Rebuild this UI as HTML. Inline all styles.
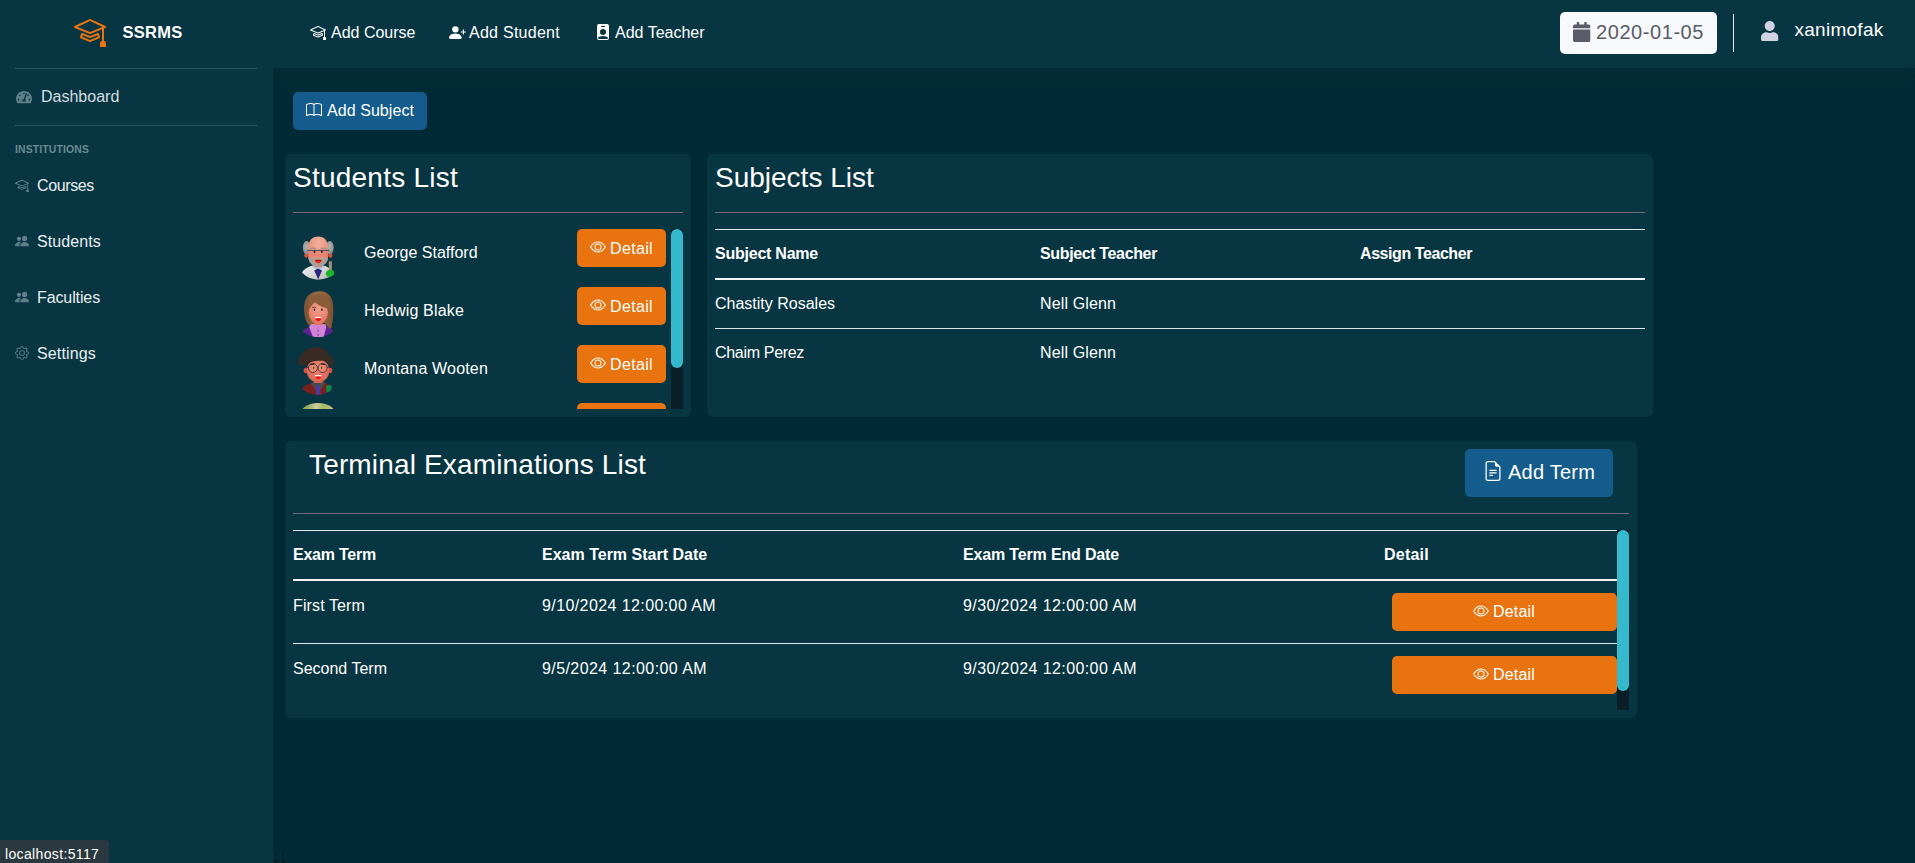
<!DOCTYPE html>
<html lang="en">
<head>
<meta charset="utf-8">
<title>SSRMS</title>
<style>
*{box-sizing:border-box;margin:0;padding:0}
html,body{width:1915px;height:863px;overflow:hidden}
body{position:relative;background:#002b36;font-family:"Liberation Sans",Arial,sans-serif;color:#fff;font-size:16px}
.abs{position:absolute}
.t{position:absolute;white-space:nowrap;line-height:1}
svg{display:block}
#sidebar{left:0;top:0;width:273px;height:863px;background:#073642}
#topbar{left:0;top:0;width:1642px;height:68px;background:#073642;box-shadow:0 2.4px 28px 0 rgba(58,59,69,.15)}
#topwrap{left:273px;top:0;width:1642px;height:200px;overflow:hidden}
.card{background:#073642;border-radius:6px}
.hr{position:absolute;height:1px}
.btn-o{position:absolute;background:#e9730f;border-radius:5px}
.btn-b{position:absolute;background:#145c8b;border-radius:5px}
</style>
</head>
<body>

<svg width="0" height="0" style="position:absolute">
<defs>
<symbol id="i-mortar" viewBox="0 0 16 16"><path d="M8.211 2.047a.5.5 0 0 0-.422 0l-7.5 3.5a.5.5 0 0 0 .025.917l7.5 3a.5.5 0 0 0 .372 0L14 7.14V13a1 1 0 0 0-1 1v2h3v-2a1 1 0 0 0-1-1V6.739l.686-.275a.5.5 0 0 0 .025-.917l-7.5-3.5ZM8 8.46 1.758 5.965 8 3.052l6.242 2.913L8 8.46Z"/><path d="M4.176 9.032a.5.5 0 0 0-.656.327l-.5 1.7a.5.5 0 0 0 .294.605l4.5 1.8a.5.5 0 0 0 .372 0l4.5-1.8a.5.5 0 0 0 .294-.605l-.5-1.7a.5.5 0 0 0-.656-.327L8 10.466 4.176 9.032Zm-.068 1.873.22-.748 3.496 1.311a.5.5 0 0 0 .352 0l3.496-1.311.22.748L8 12.46l-3.892-1.556Z"/></symbol>
<symbol id="i-people" viewBox="0 0 16 16"><path d="M7 14s-1 0-1-1 1-4 5-4 5 3 5 4-1 1-1 1H7zm4-6a3 3 0 1 0 0-6 3 3 0 0 0 0 6z"/><path fill-rule="evenodd" d="M5.216 14A2.238 2.238 0 0 1 5 13c0-1.355.68-2.75 1.936-3.72A6.325 6.325 0 0 0 5 9c-4 0-5 3-5 4s1 1 1 1h4.216z"/><path d="M4.500 8a2.500 2.500 0 1 0 0-5 2.500 2.500 0 0 0 0 5z"/></symbol>
<symbol id="i-gear" viewBox="0 0 16 16"><path d="M8 4.754a3.246 3.246 0 1 0 0 6.492 3.246 3.246 0 0 0 0-6.492zM5.754 8a2.246 2.246 0 1 1 4.492 0 2.246 2.246 0 0 1-4.492 0z"/><path d="M9.796 1.343c-.527-1.790-3.065-1.790-3.592 0l-.094.319a.873.873 0 0 1-1.255.520l-.292-.160c-1.640-.892-3.433.902-2.540 2.541l.159.292a.873.873 0 0 1-.520 1.255l-.319.094c-1.790.527-1.790 3.065 0 3.592l.319.094a.873.873 0 0 1 .520 1.255l-.160.292c-.892 1.640.901 3.434 2.541 2.540l.292-.159a.873.873 0 0 1 1.255.520l.094.319c.527 1.790 3.065 1.790 3.592 0l.094-.319a.873.873 0 0 1 1.255-.520l.292.160c1.640.893 3.434-.902 2.540-2.541l-.159-.292a.873.873 0 0 1 .520-1.255l.319-.094c1.790-.527 1.790-3.065 0-3.592l-.319-.094a.873.873 0 0 1-.520-1.255l.160-.292c.893-1.640-.902-3.433-2.541-2.540l-.292.159a.873.873 0 0 1-1.255-.520l-.094-.319zm-2.633.283c.246-.835 1.428-.835 1.674 0l.094.319a1.873 1.873 0 0 0 2.693 1.115l.291-.160c.764-.415 1.600.420 1.184 1.185l-.159.292a1.873 1.873 0 0 0 1.116 2.692l.318.094c.835.246.835 1.428 0 1.674l-.319.094a1.873 1.873 0 0 0-1.115 2.693l.160.291c.415.764-.420 1.600-1.185 1.184l-.291-.159a1.873 1.873 0 0 0-2.693 1.116l-.094.318c-.246.835-1.428.835-1.674 0l-.094-.319a1.873 1.873 0 0 0-2.692-1.115l-.292.160c-.764.415-1.600-.420-1.184-1.185l.159-.291A1.873 1.873 0 0 0 1.945 8.930l-.319-.094c-.835-.246-.835-1.428 0-1.674l.319-.094A1.873 1.873 0 0 0 3.060 4.377l-.160-.292c-.415-.764.420-1.600 1.185-1.184l.292.159a1.873 1.873 0 0 0 2.692-1.115l.094-.319z"/></symbol>
<symbol id="i-eye" viewBox="0 0 16 16"><path d="M16 8s-3-5.500-8-5.500S0 8 0 8s3 5.500 8 5.500S16 8 16 8zM1.173 8a13.133 13.133 0 0 1 1.660-2.043C4.120 4.668 5.880 3.500 8 3.500c2.120 0 3.879 1.168 5.168 2.457A13.133 13.133 0 0 1 14.828 8c-.058.087-.122.183-.195.288-.335.480-.830 1.120-1.465 1.755C11.879 11.332 10.119 12.500 8 12.500c-2.120 0-3.879-1.168-5.168-2.457A13.134 13.134 0 0 1 1.172 8z"/><path d="M8 5.500a2.500 2.500 0 1 0 0 5 2.500 2.500 0 0 0 0-5zM4.500 8a3.500 3.500 0 1 1 7 0 3.500 3.500 0 0 1-7 0z"/></symbol>
<symbol id="i-book" viewBox="0 0 16 16"><path d="M1 2.828c.885-.370 2.154-.769 3.388-.893 1.330-.134 2.458.063 3.112.752v9.746c-.935-.530-2.120-.603-3.213-.493-1.180.120-2.370.461-3.287.811V2.828zm7.500-.141c.654-.689 1.782-.886 3.112-.752 1.234.124 2.503.523 3.388.893v9.923c-.918-.350-2.107-.692-3.287-.810-1.094-.111-2.278-.039-3.213.492V2.687zM8 1.783C7.015.936 5.587.810 4.287.940c-1.514.153-3.042.672-3.994 1.105A.5.5 0 0 0 0 2.500v11a.5.5 0 0 0 .707.455c.882-.400 2.303-.881 3.680-1.020 1.409-.142 2.590.087 3.223.877a.5.5 0 0 0 .780 0c.633-.790 1.814-1.019 3.222-.877 1.378.139 2.800.620 3.681 1.020A.5.5 0 0 0 16 13.500v-11a.5.5 0 0 0-.293-.455c-.952-.433-2.480-.952-3.994-1.105C10.413.809 8.985.936 8 1.783z"/></symbol>
<symbol id="i-file" viewBox="0 0 16 16"><path d="M5.500 7a.5.5 0 0 0 0 1h5a.5.5 0 0 0 0-1h-5zM5 9.500a.5.5 0 0 1 .5-.5h5a.5.5 0 0 1 0 1h-5a.5.5 0 0 1-.5-.5zm0 2a.5.5 0 0 1 .5-.5h2a.5.5 0 0 1 0 1h-2a.5.5 0 0 1-.5-.5z"/><path d="M9.500 0H4a2 2 0 0 0-2 2v12a2 2 0 0 0 2 2h8a2 2 0 0 0 2-2V4.500L9.500 0zm0 1v2A1.500 1.500 0 0 0 11 4.500h2V14a1 1 0 0 1-1 1H4a1 1 0 0 1-1-1V2a1 1 0 0 1 1-1h5.500z"/></symbol>
<symbol id="i-pplus" viewBox="0 0 16 16"><path d="M1 14s-1 0-1-1 1-4 6-4 6 3 6 4-1 1-1 1H1zm5-6a3 3 0 1 0 0-6 3 3 0 0 0 0 6z"/><path fill-rule="evenodd" d="M13.500 5a.5.5 0 0 1 .5.5V7h1.500a.5.5 0 0 1 0 1H14v1.500a.5.5 0 0 1-1 0V8h-1.500a.5.5 0 0 1 0-1H13V5.500a.5.5 0 0 1 .5-.5z"/></symbol>
<symbol id="i-badge" viewBox="0 0 16 16"><path d="M2 2a2 2 0 0 1 2-2h8a2 2 0 0 1 2 2v12a2 2 0 0 1-2 2H4a2 2 0 0 1-2-2V2zm4.500 0a.5.5 0 0 0 0 1h3a.5.5 0 0 0 0-1h-3zM8 11a3 3 0 1 0 0-6 3 3 0 0 0 0 6zm5 2.755C12.146 12.825 10.623 12 8 12s-4.146.826-5 1.755V14a1 1 0 0 0 1 1h8a1 1 0 0 0 1-1v-.245z"/></symbol>
<symbol id="i-user" viewBox="0 0 448 512"><path d="M224 256c70.700 0 128-57.300 128-128S294.700 0 224 0 96 57.300 96 128s57.300 128 128 128zm89.600 32h-16.700c-22.200 10.200-46.900 16-72.900 16s-50.600-5.800-72.900-16h-16.700C60.200 288 0 348.200 0 422.400V464c0 26.500 21.500 48 48 48h352c26.500 0 48-21.500 48-48v-41.600c0-74.200-60.200-134.400-134.400-134.400z"/></symbol>
<symbol id="i-cal" viewBox="0 0 448 512"><path d="M12 192h424c6.600 0 12 5.400 12 12v260c0 26.500-21.500 48-48 48H48c-26.500 0-48-21.500-48-48V204c0-6.600 5.400-12 12-12zm436-44v-36c0-26.500-21.500-48-48-48h-48V12c0-6.600-5.400-12-12-12h-40c-6.600 0-12 5.400-12 12v52H160V12c0-6.600-5.400-12-12-12h-40c-6.600 0-12 5.400-12 12v52H48C21.500 64 0 85.500 0 112v36c0 6.600 5.400 12 12 12h424c6.600 0 12-5.400 12-12z"/></symbol>
<symbol id="i-tach" viewBox="0 0 576 512"><path d="M288 32C128.940 32 0 160.940 0 320c0 52.800 14.250 102.260 39.060 144.800 5.610 9.620 16.300 15.200 27.440 15.200h443c11.140 0 21.830-5.580 27.440-15.200C561.750 422.260 576 372.800 576 320c0-159.060-128.940-288-288-288zm0 64c14.710 0 26.580 10.130 30.320 23.650-1.110 2.260-2.640 4.230-3.450 6.670l-9.220 27.670c-5.130 3.490-10.970 6.010-17.640 6.010-17.670 0-32-14.330-32-32S270.330 96 288 96zM96 384c-17.670 0-32-14.330-32-32s14.330-32 32-32 32 14.330 32 32-14.330 32-32 32zm48-160c-17.670 0-32-14.330-32-32s14.330-32 32-32 32 14.330 32 32-14.330 32-32 32zm246.770-72.410l-61.330 184C343.130 347.330 352 364.540 352 384c0 11.720-3.380 22.550-8.880 32H232.880c-5.500-9.450-8.880-20.280-8.880-32 0-33.940 26.500-61.430 59.900-63.590l61.340-184.010c4.170-12.560 17.730-19.450 30.360-15.170 12.570 4.190 19.350 17.790 15.170 30.360zm14.660 57.200l15.520-46.550c3.470-1.290 7.130-2.230 11.050-2.230 17.670 0 32 14.330 32 32s-14.330 32-32 32c-11.380-.010-21.250-6.100-26.570-15.220zM480 384c-17.670 0-32-14.330-32-32s14.330-32 32-32 32 14.330 32 32-14.330 32-32 32z"/></symbol>

<symbol id="av0" viewBox="0 0 50 60">
<defs><radialGradient id="g0" cx="50%" cy="22%" r="75%"><stop offset="0" stop-color="#f6b29d"/><stop offset="1" stop-color="#e3826c"/></radialGradient>
<linearGradient id="c0" x1="0" y1="0" x2="1" y2="1"><stop offset="0" stop-color="#f4f4f1"/><stop offset="1" stop-color="#b9b9b5"/></linearGradient>
<radialGradient id="hh0" cx="50%" cy="40%" r="60%"><stop offset="0" stop-color="#b4b4b4"/><stop offset="1" stop-color="#8a8a8a"/></radialGradient></defs>
<ellipse cx="11.200" cy="25.200" rx="1.900" ry="2.700" fill="#d9513c"/><ellipse cx="35.400" cy="25.200" rx="1.900" ry="2.700" fill="#d9513c"/>
<ellipse cx="11.700" cy="17.600" rx="3.900" ry="6.600" fill="url(#hh0)"/><ellipse cx="34.800" cy="17.600" rx="3.900" ry="6.600" fill="url(#hh0)"/>
<path d="M7 42.500 C10 38 15 36 19 35.600 L28 35.600 C31 36 34 37.500 36 40 L37 45 C33 48.500 27 49.600 23 49.600 C17 49.600 11 47 7 42.500Z" fill="url(#c0)"/>
<path d="M16.500 36.500 L23 41 L30 36.500 L27 35 L19 35Z" fill="#a9cdea"/>
<path d="M19.200 40.500 L23 38.500 L27 40.500 L23.200 49.300Z" fill="#2a2380"/>
<rect x="19.500" y="33" width="7.500" height="4.200" fill="#e0735c"/>
<path d="M13.300 17.500 C13.300 10.500 17.500 6.600 23.200 6.600 C29 6.600 33.100 10.500 33.100 17.500 L33.100 26 C33.100 32.500 28.500 36 23.200 36 C17.900 36 13.300 32.500 13.300 26Z" fill="url(#g0)"/>
<path d="M13.300 27 C15 28.800 19 28.600 23.200 27.700 C27 28.600 31 28.800 33.100 27 C33.100 33 28.500 36.300 23.200 36.300 C17.900 36.300 13.300 33 13.300 27Z" fill="#ad9d94"/>
<path d="M19.800 30.100 Q23.300 29.500 26.800 30.100 Q25.800 33.200 23.300 33.200 Q20.800 33.200 19.800 30.100Z" fill="#c41015"/>
<ellipse cx="23.300" cy="32" rx="2" ry="1.100" fill="#ff2a25"/>
<path d="M15 18.700 q3-1.300 6 0 M25.500 18.700 q3-1.300 6 0" stroke="#a09590" stroke-width="1.200" fill="none"/>
<rect x="13" y="20.800" width="20.500" height="6" rx="1.200" fill="#e5756a" opacity=".5"/>
<rect x="12.200" y="19.900" width="22" height="1.100" fill="#4a5560"/>
<ellipse cx="19.500" cy="21.800" rx=".9" ry="1.300" fill="#2a2220"/><ellipse cx="26.800" cy="21.800" rx=".9" ry="1.300" fill="#2a2220"/>
<rect x="33.800" y="31.300" width="3.100" height="9" fill="#a39274"/>
<ellipse cx="35" cy="43.300" rx="4.300" ry="3.400" transform="rotate(-20 35 43.300)" fill="#1cb42b"/>
</symbol>
<symbol id="av1" viewBox="0 0 50 60">
<defs><radialGradient id="g1" cx="50%" cy="35%" r="70%"><stop offset="0" stop-color="#f5a08b"/><stop offset="1" stop-color="#e2735f"/></radialGradient>
<linearGradient id="h1" x1="0" y1="0" x2="1" y2="0"><stop offset="0" stop-color="#7d5232"/><stop offset=".5" stop-color="#9a6b44"/><stop offset="1" stop-color="#7d5232"/></linearGradient></defs>
<path d="M9 24 C9 12 15 6.300 25 6.300 C34 6.300 38.300 13 38.300 23 C38.300 32 37.500 40 35.800 44.500 C32 42 30 38 30 38 L15 40.500 C13 40.500 9 34 9 24Z" fill="url(#h1)"/>
<path d="M7.300 45.800 C11 43 14 42 17 41 L30 41 C33 42 36 43.500 38.700 46 C34 50 29 52 23 52 C17 52 11 50 7.300 45.800Z" fill="#5a2592"/>
<path d="M14 41.500 L16.500 39 L30.500 39 L31.300 42 L28.800 51.500 C25 52.200 21 52.200 17.800 51.500Z" fill="#d384d6"/>
<path d="M22.800 42 v9.500" stroke="#b565c0" stroke-width=".8"/>
<circle cx="23.300" cy="45.600" r=".7" fill="#6a3aa0"/><circle cx="23.300" cy="50" r=".7" fill="#6a3aa0"/>
<rect x="19.500" y="36" width="8" height="4" fill="#dc6f5c"/>
<ellipse cx="23.300" cy="27.500" rx="9.600" ry="11.400" fill="url(#g1)"/>
<path d="M13.800 25 C14 17 17 13 20.500 10 C24 8 30 9 33.500 14 C35 17 35 21 34.600 23.500 C30 23 25 22 20 17 C18 19 16 21 13.800 25Z" fill="#8a5c38"/>
<path d="M17 22.700 q2.200-1 4.200 0" stroke="#7a4e30" stroke-width="1" fill="none"/>
<ellipse cx="19.500" cy="24.800" rx=".85" ry="1.300" fill="#2b3040"/><ellipse cx="26.800" cy="24.800" rx=".85" ry="1.300" fill="#2b3040"/>
<path d="M19.800 32.200 Q23.300 31.300 26.800 32.200 Q25.800 36.200 23.300 36.200 Q20.800 36.200 19.800 32.200Z" fill="#ee1418"/>
<path d="M19.800 32.200 Q23.300 31.300 26.800 32.200 L26.400 33.300 Q23.300 32.700 20.200 33.300Z" fill="#fff"/>
</symbol>
<symbol id="av2" viewBox="0 0 50 60">
<defs><radialGradient id="g2" cx="50%" cy="35%" r="70%"><stop offset="0" stop-color="#ee8a74"/><stop offset="1" stop-color="#d6614f"/></radialGradient></defs>
<path d="M7.100 48.500 C11 45 15 43.300 18 42.600 L29 42.600 C32 43.300 34.500 44.500 36.800 47.500 C34 52 29 54.800 23 54.800 C17 54.800 11 52.500 7.100 48.500Z" fill="#7b1f1c"/>
<path d="M15.500 43.500 L18.500 41.500 L28.500 41.500 L30.500 43.500 L26.500 49 L20 49Z" fill="#4b4b4b"/>
<path d="M20.800 46 L23 44.400 L25.300 46 L25.600 54.600 L20.600 54.600Z" fill="#4b3c9c"/>
<path d="M31 46 l3.500-1.200 l2.500 1.500 l-1 4.500 l-4.500 1.800Z" fill="#0d8a4c"/>
<rect x="19" y="39" width="8.500" height="4" fill="#d2604e"/>
<ellipse cx="10.600" cy="30.500" rx="1.900" ry="2.800" fill="#d8503f"/><ellipse cx="35.400" cy="30.500" rx="1.900" ry="2.800" fill="#d8503f"/>
<ellipse cx="23" cy="30.800" rx="11.300" ry="11.600" fill="url(#g2)"/>
<path d="M3.300 21 C5 14 11 7.100 21 7.100 C28 7.100 31.500 10 33.500 14.500 C37 15.500 39 19 38.600 22.500 C38.300 25 37 27 35 27.800 C35 23 32 20.800 26 20.800 C19 20.800 14 22 11 25.500 C8 25.800 5 25 3.600 23.500Z" fill="#3a2a25"/>
<circle cx="17.900" cy="28" r="4.500" fill="#f0a090" fill-opacity=".35" stroke="#4a3530" stroke-width=".9"/><circle cx="27.600" cy="28" r="4.500" fill="#f0a090" fill-opacity=".35" stroke="#4a3530" stroke-width=".9"/>
<path d="M22.400 27.500 h.8 M11 27.500 l2.500 0 M32 27.500 l3 0" stroke="#4a3530" stroke-width=".9"/>
<path d="M15.500 24.600 l4-.8 M26 23.800 l4 .8" stroke="#2e2220" stroke-width="1.200"/>
<ellipse cx="18.800" cy="27.800" rx=".8" ry="1.200" fill="#5a5a10"/><ellipse cx="26.600" cy="27.800" rx=".8" ry="1.200" fill="#5a5a10"/>
<path d="M19.800 35.300 Q23.300 34.500 26.800 35.300 Q25.800 39.300 23.300 39.300 Q20.800 39.300 19.800 35.300Z" fill="#ee1418"/>
<path d="M19.800 35.300 Q23.300 34.500 26.800 35.300 L26.400 36.500 Q23.300 35.900 20.200 36.500Z" fill="#fff"/>
</symbol>
<symbol id="av3" viewBox="0 0 50 60">
<defs><linearGradient id="g3" x1="0" y1="0" x2="1" y2="0"><stop offset="0" stop-color="#a9a21e"/><stop offset=".25" stop-color="#8fb26a"/><stop offset=".45" stop-color="#d8c9a0"/><stop offset=".65" stop-color="#9cbf5a"/><stop offset=".85" stop-color="#d0b890"/><stop offset="1" stop-color="#a0a828"/></linearGradient></defs>
<ellipse cx="23" cy="21" rx="19" ry="14" fill="url(#g3)"/>
</symbol>
</defs>
</svg>
<div id="sidebar" class="abs"></div>
<svg class="abs" style="left:73.5px;top:15px" width="32" height="32" fill="#e9730f"><use href="#i-mortar"/></svg>
<div class="t" id="brand" style="left:122.5px;top:24px;font-size:16.5px;font-weight:bold;letter-spacing:0.260px">SSRMS</div>
<div class="hr" style="left:15px;top:68px;width:242px;background:#2c545e"></div>
<svg class="abs" style="left:16px;top:89.7px" width="16" height="14.2" fill="#5e7f89"><use href="#i-tach"/></svg>
<div class="t" id="s-dash" style="left:41px;top:89px;font-size:16px;color:#d5dde0">Dashboard</div>
<div class="hr" style="left:15px;top:125px;width:242px;background:#2c545e"></div>
<div class="t" id="s-inst" style="left:15px;top:145px;font-size:10.4px;font-weight:bold;color:#6d8a93;letter-spacing:0.150px">INSTITUTIONS</div>
<svg class="abs" style="left:15px;top:178.2px" width="14" height="14" fill="#5e7f89"><use href="#i-mortar"/></svg>
<div class="t" id="s-courses" style="left:37px;top:178px;font-size:16px;color:#e9eef0;letter-spacing:-0.371px">Courses</div>
<svg class="abs" style="left:15px;top:234.2px" width="14" height="14" fill="#5e7f89"><use href="#i-people"/></svg>
<div class="t" id="s-students" style="left:37px;top:234px;font-size:16px;color:#e9eef0;letter-spacing:0.100px">Students</div>
<svg class="abs" style="left:15px;top:290.2px" width="14" height="14" fill="#5e7f89"><use href="#i-people"/></svg>
<div class="t" id="s-faculties" style="left:37px;top:290px;font-size:16px;color:#e9eef0;letter-spacing:-0.111px">Faculties</div>
<svg class="abs" style="left:15px;top:346.2px" width="14" height="14" fill="#5e7f89"><use href="#i-gear"/></svg>
<div class="t" id="s-settings" style="left:37px;top:346px;font-size:16px;color:#e9eef0;letter-spacing:0.150px">Settings</div>
<div class="t" id="status" style="left:0;top:840px;width:109px;height:23px;background:#2a3840;border-top-right-radius:4px;font-size:14px;line-height:28px;padding-left:5px;color:#fff;letter-spacing:0.35px">localhost:5117</div>
<div id="topwrap" class="abs"><div id="topbar" class="abs"></div></div>
<svg class="abs" style="left:310.4px;top:24px" width="16" height="16" fill="#fff"><use href="#i-mortar"/></svg>
<div class="t" id="t-course" style="left:331px;top:25px;font-size:16px">Add Course</div>
<svg class="abs" style="left:448.6px;top:24px" width="17" height="17" fill="#fff"><use href="#i-pplus"/></svg>
<div class="t" id="t-student" style="left:469px;top:25px;font-size:16px;letter-spacing:0.264px">Add Student</div>
<svg class="abs" style="left:594.8px;top:24px" width="16" height="16" fill="#fff"><use href="#i-badge"/></svg>
<div class="t" id="t-teacher" style="left:615px;top:25px;font-size:16px">Add Teacher</div>
<div class="abs" style="left:1560px;top:12px;width:157px;height:42px;background:#f8f9fc;border-radius:5px"></div>
<svg class="abs" style="left:1573px;top:22px" width="17.5" height="20" fill="#5a5c69"><use href="#i-cal"/></svg>
<div class="t" id="t-date" style="left:1596px;top:22px;font-size:20px;color:#5a5c69;letter-spacing:0.570px">2020-01-05</div>
<div class="abs" style="left:1733px;top:14px;width:1px;height:38px;background:#e3e6f0"></div>
<svg class="abs" style="left:1761px;top:21px" width="17.5" height="20" fill="#d1d3e2"><use href="#i-user"/></svg>
<div class="t" id="t-user" style="left:1794.5px;top:20px;font-size:19px;letter-spacing:0.267px">xanimofak</div>
<div class="btn-b" style="left:293px;top:92px;width:134px;height:38px"></div>
<svg class="abs" style="left:306px;top:102px" width="16" height="16" fill="#fff"><use href="#i-book"/></svg>
<div class="t" id="b-subject" style="left:327px;top:103px;font-size:16px;letter-spacing:0.064px">Add Subject</div>
<div class="abs card" style="left:285px;top:154px;width:406px;height:263px"></div>
<div class="t" id="h-students" style="left:293px;top:164px;font-size:28px;letter-spacing:0.238px">Students List</div>
<div class="hr" style="left:293px;top:212px;width:390px;background:#6e6b74"></div>
<div class="abs" id="stulist" style="left:293px;top:229px;width:378px;height:180px;overflow:hidden">
<svg class="abs" style="left:2px;top:1px" width="50" height="60"><use href="#av0"/></svg>
<div class="t" id="n0" style="left:71px;top:16px;font-size:16px">George Stafford</div>
<div class="btn-o" style="left:284px;top:0px;width:89px;height:38px"></div>
<svg class="abs" style="left:297px;top:10px" width="16" height="16" fill="#fff"><use href="#i-eye"/></svg>
<div class="t" style="left:317px;top:12px;font-size:16px;letter-spacing:0.35px">Detail</div>
<svg class="abs" style="left:2px;top:56px" width="50" height="60"><use href="#av1"/></svg>
<div class="t" id="n1" style="left:71px;top:74px;font-size:16px;letter-spacing:0.183px">Hedwig Blake</div>
<div class="btn-o" style="left:284px;top:58px;width:89px;height:38px"></div>
<svg class="abs" style="left:297px;top:68px" width="16" height="16" fill="#fff"><use href="#i-eye"/></svg>
<div class="t" style="left:317px;top:70px;font-size:16px;letter-spacing:0.35px">Detail</div>
<svg class="abs" style="left:2px;top:111px" width="50" height="60"><use href="#av2"/></svg>
<div class="t" id="n2" style="left:71px;top:132px;font-size:16px;letter-spacing:0.171px">Montana Wooten</div>
<div class="btn-o" style="left:284px;top:116px;width:89px;height:38px"></div>
<svg class="abs" style="left:297px;top:126px" width="16" height="16" fill="#fff"><use href="#i-eye"/></svg>
<div class="t" style="left:317px;top:128px;font-size:16px;letter-spacing:0.35px">Detail</div>
<svg class="abs" style="left:2px;top:166.600px" width="50" height="60"><use href="#av3"/></svg>
<div class="btn-o" style="left:284px;top:174px;width:89px;height:38px"></div>
<svg class="abs" style="left:297px;top:184px" width="16" height="16" fill="#fff"><use href="#i-eye"/></svg>
<div class="t" style="left:317px;top:186px;font-size:16px;letter-spacing:0.35px">Detail</div>
</div>
<div class="abs" style="left:671px;top:229px;width:12px;height:180px;background:#0b1d26"></div>
<div class="abs" style="left:671px;top:229px;width:12px;height:139px;background:#36b9cc;border-radius:6px"></div>
<div class="abs card" style="left:707px;top:154px;width:946px;height:263px"></div>
<div class="t" id="h-subjects" style="left:715px;top:164px;font-size:28px">Subjects List</div>
<div class="hr" style="left:715px;top:212px;width:930px;background:#6e6b74"></div>
<div class="hr" style="left:715px;top:229px;width:930px;background:#dfe6e9"></div>
<div class="hr" style="left:715px;top:278px;width:930px;height:2px;background:#f1f4f5"></div>
<div class="hr" style="left:715px;top:328px;width:930px;background:#dfe6e9"></div>
<div class="t" id="th1" style="left:715px;top:246px;font-size:16px;font-weight:bold;letter-spacing:-0.233px">Subject Name</div>
<div class="t" id="th2" style="left:1040px;top:246px;font-size:16px;font-weight:bold;letter-spacing:-0.360px">Subject Teacher</div>
<div class="t" id="th3" style="left:1360px;top:246px;font-size:16px;font-weight:bold;letter-spacing:-0.429px">Assign Teacher</div>
<div class="t" id="sr1a" style="left:715px;top:296px;font-size:16px">Chastity Rosales</div>
<div class="t" id="sr1b" style="left:1040px;top:296px;font-size:16px;letter-spacing:0.130px">Nell Glenn</div>
<div class="t" id="sr2a" style="left:715px;top:345px;font-size:16px;letter-spacing:-0.318px">Chaim Perez</div>
<div class="t" id="sr2b" style="left:1040px;top:345px;font-size:16px;letter-spacing:0.130px">Nell Glenn</div>
<div class="abs card" style="left:285px;top:441px;width:1352px;height:277px"></div>
<div class="t" id="h-term" style="left:309px;top:451px;font-size:28px;letter-spacing:0.154px">Terminal Examinations List</div>
<div class="btn-b" style="left:1465px;top:449px;width:148px;height:48px"></div>
<svg class="abs" style="left:1482.5px;top:461px" width="20" height="20" fill="#fff"><use href="#i-file"/></svg>
<div class="t" id="b-term" style="left:1508px;top:462px;font-size:20px;letter-spacing:0.225px">Add Term</div>
<div class="hr" style="left:293px;top:513px;width:1336px;background:#6e6b74"></div>
<div class="hr" style="left:293px;top:530px;width:1324px;background:#dfe6e9"></div>
<div class="hr" style="left:293px;top:579px;width:1324px;height:2px;background:#f1f4f5"></div>
<div class="hr" style="left:293px;top:643px;width:1324px;background:#dfe6e9"></div>
<div class="t" id="eh1" style="left:293px;top:547px;font-size:16px;font-weight:bold;letter-spacing:-0.233px">Exam Term</div>
<div class="t" id="eh2" style="left:542px;top:547px;font-size:16px;font-weight:bold">Exam Term Start Date</div>
<div class="t" id="eh3" style="left:963px;top:547px;font-size:16px;font-weight:bold;letter-spacing:-0.161px">Exam Term End Date</div>
<div class="t" id="eh4" style="left:1384px;top:547px;font-size:16px;font-weight:bold;letter-spacing:0.233px">Detail</div>
<div class="t" id="er1a" style="left:293px;top:598px;font-size:16px;letter-spacing:0.120px">First Term</div>
<div class="t" id="er1b" style="left:542px;top:598px;font-size:16px;letter-spacing:0.405px">9/10/2024 12:00:00 AM</div>
<div class="t" id="er1c" style="left:963px;top:598px;font-size:16px;letter-spacing:0.405px">9/30/2024 12:00:00 AM</div>
<div class="btn-o" style="left:1392px;top:593px;width:225px;height:38px"></div>
<svg class="abs" style="left:1473px;top:603px" width="16" height="16" fill="#fff"><use href="#i-eye"/></svg>
<div class="t" id="ed1" style="left:1493px;top:604px;font-size:16px;letter-spacing:0.183px">Detail</div>
<div class="t" id="er2a" style="left:293px;top:661px;font-size:16px">Second Term</div>
<div class="t" id="er2b" style="left:542px;top:661px;font-size:16px;letter-spacing:0.420px">9/5/2024 12:00:00 AM</div>
<div class="t" id="er2c" style="left:963px;top:661px;font-size:16px;letter-spacing:0.405px">9/30/2024 12:00:00 AM</div>
<div class="btn-o" style="left:1392px;top:656px;width:225px;height:38px"></div>
<svg class="abs" style="left:1473px;top:666px" width="16" height="16" fill="#fff"><use href="#i-eye"/></svg>
<div class="t" id="ed2" style="left:1493px;top:667px;font-size:16px;letter-spacing:0.183px">Detail</div>
<div class="abs" style="left:1617px;top:530px;width:12px;height:180px;background:#0b1d26"></div>
<div class="abs" style="left:1617px;top:530px;width:12px;height:161px;background:#36b9cc;border-radius:6px"></div>
<div class="t" id="semi" style="left:274px;top:848px;font-size:15px;color:#000;letter-spacing:3.3px">;;</div>
</body>
</html>
